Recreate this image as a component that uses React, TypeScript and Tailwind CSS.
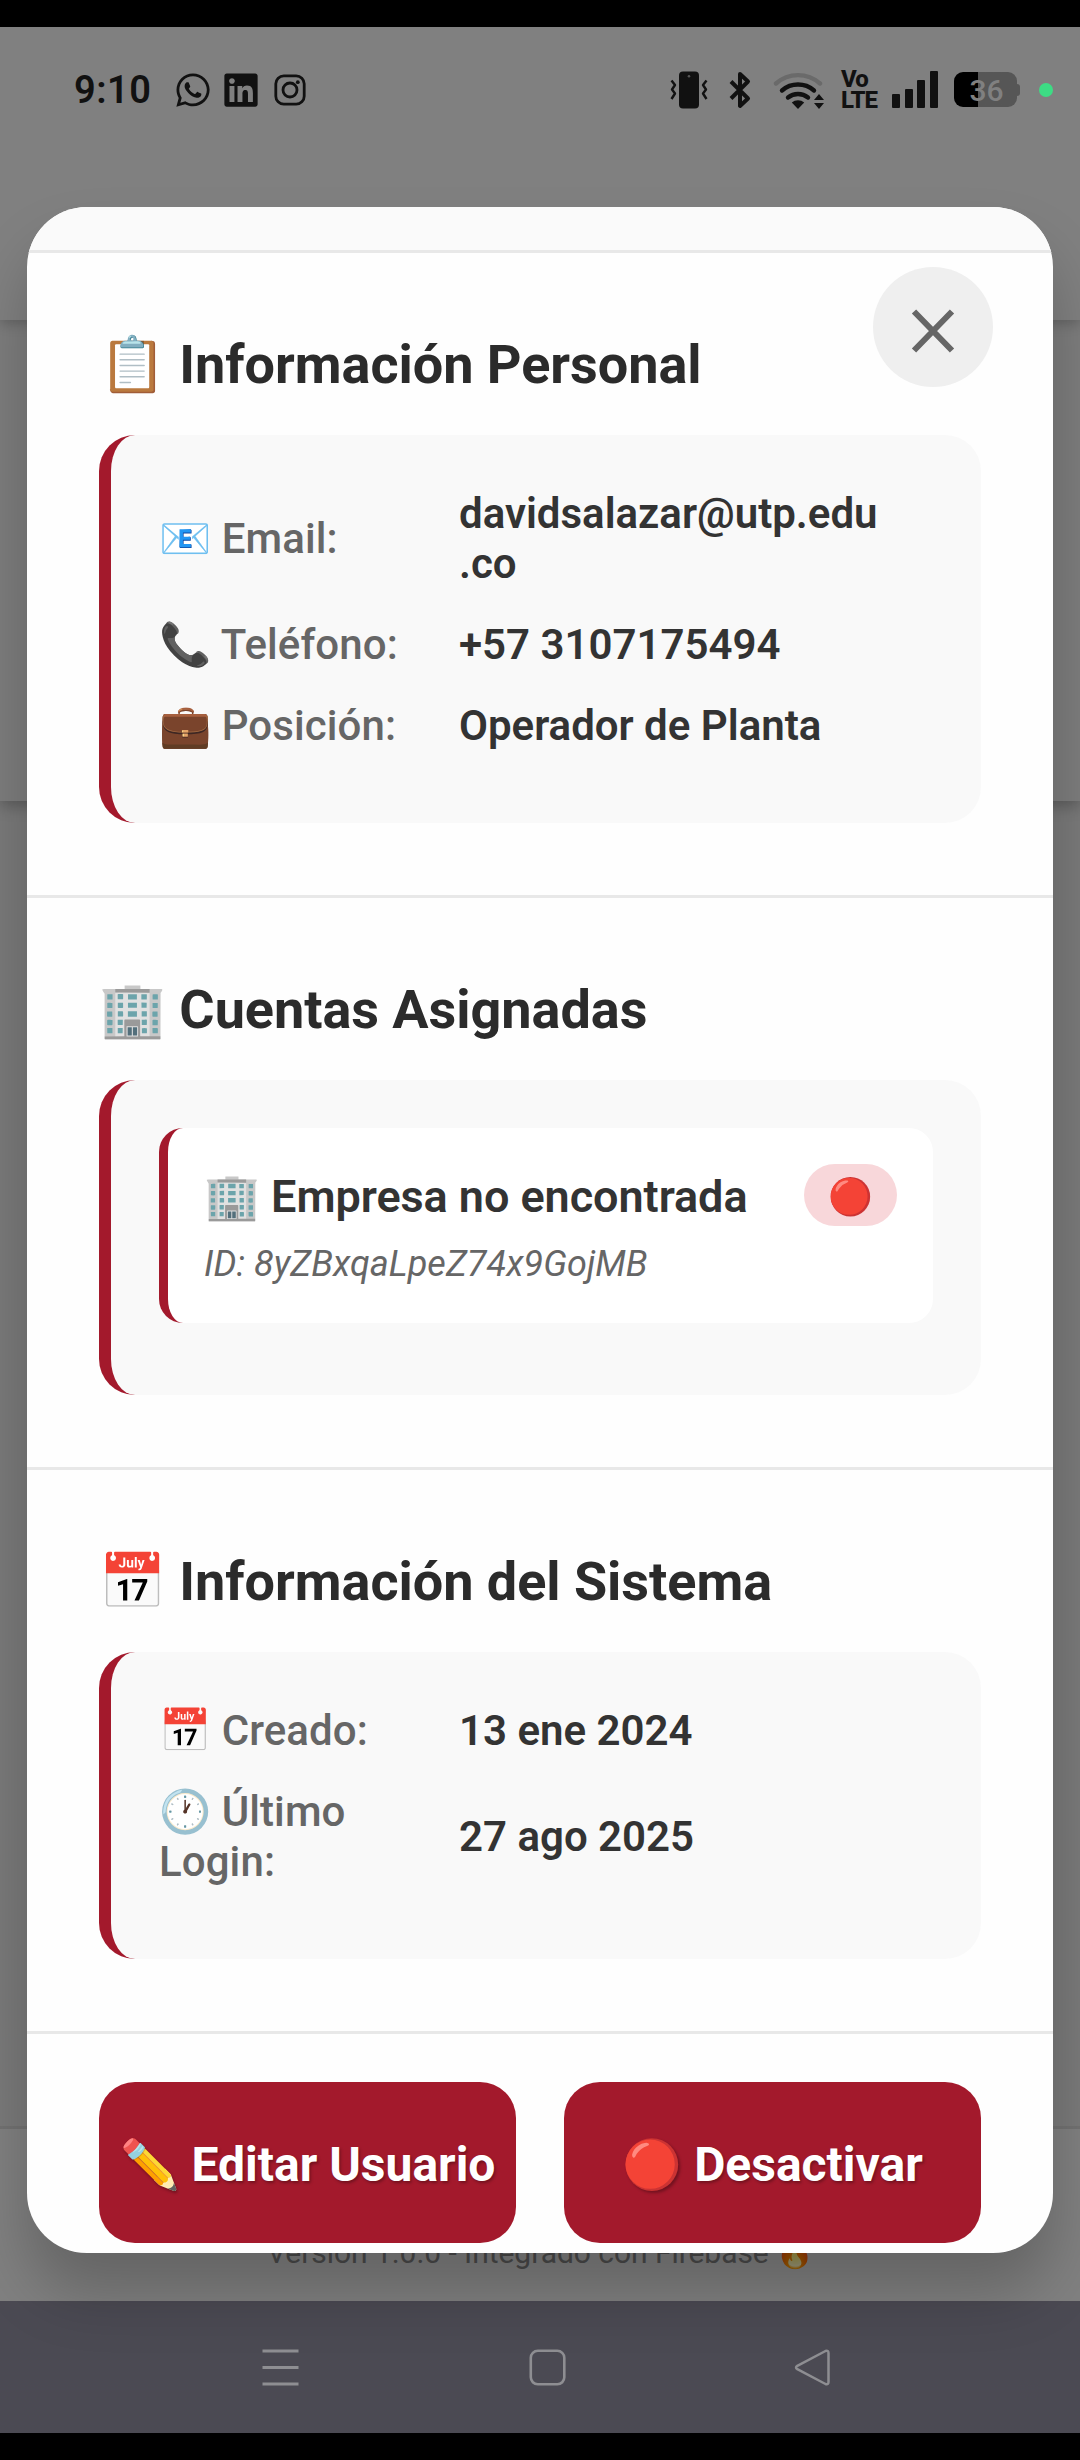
import type { ReactNode } from "react";
import { FaLinkedin, FaWhatsapp } from "react-icons/fa";

function StatusBar() {
  return (
    <div className="flex h-[125px] items-center justify-between pr-[27px] pl-[74px] text-[#111]">
      <div className="flex items-center">
        <span className="w-[102px] text-[38px] leading-[44px] font-semibold tracking-[0.5px]">9:10</span>
        <FaWhatsapp className="h-[38px] w-[34px]" />
        <FaLinkedin className="ml-[14px] h-[38px] w-[34px]" />
        <svg className="ml-[16px] h-[32px] w-[32px]" viewBox="0 0 32 32" fill="none" stroke="currentColor" strokeWidth="2.8">
          <rect x="1.8" y="1.8" width="28.4" height="28.4" rx="8" />
          <circle cx="16" cy="16" r="7" />
          <circle cx="23.8" cy="8.2" r="1.9" fill="currentColor" stroke="none" />
        </svg>
      </div>
      <div className="flex items-center">
        <svg className="h-[38px] w-[38px]" viewBox="0 0 38 38" fill="none" stroke="currentColor" strokeWidth="2.4">
          <rect x="9" y="0.5" width="20" height="37" rx="4" fill="currentColor" stroke="none" />
          <circle cx="19" cy="5.2" r="1.3" fill="#555" stroke="none" />
          <path d="M1.500 9.500l3.500 4.500-3 4.500 3 4-3.500 5.500" strokeLinejoin="round" />
          <path d="M36.500 9.500l-3.500 4.500 3 4.500-3 4 3.500 5.500" strokeLinejoin="round" />
        </svg>
        <svg className="ml-[21px] h-[38px] w-[22px]" viewBox="0 0 22 38" fill="none" stroke="currentColor" strokeWidth="4" strokeLinejoin="round">
          <path d="M2 10.500L19 27.500 11 35V3l8 7.500L2 27.500" />
        </svg>
        <svg className="ml-[22px] h-[38px] w-[52px]" viewBox="0 0 52 38" fill="none" strokeWidth="4.4" strokeLinecap="round">
          <path d="M3 12.500a33 33 0 0 1 44 0" stroke="#6a6a6a" />
          <path d="M9 19.500a24.500 24.500 0 0 1 32 0" stroke="currentColor" />
          <path d="M15 26.500a16 16 0 0 1 20 0" stroke="currentColor" />
          <path d="M18.800 31.500a9.500 9.500 0 0 1 12.400 0L25 38z" fill="currentColor" />
          <path d="M41 29l5-6 5 6zM41 32l5 6 5-6z" fill="currentColor" />
        </svg>
        <div className="ml-[16px] flex w-[33px] flex-col text-[24px] leading-[21px] font-extrabold tracking-[-1px]">
          <span>Vo</span>
          <span>LTE</span>
        </div>
        <div className="ml-[18px] flex h-[37px] w-[46px] items-end justify-between">
          <i className="h-[14px] w-[8px] rounded-[1px] bg-[#111]" />
          <i className="h-[19px] w-[8px] rounded-[1px] bg-[#111]" />
          <i className="h-[28px] w-[8px] rounded-[1px] bg-[#111]" />
          <i className="h-[37px] w-[8px] rounded-[1px] bg-[#111]" />
        </div>
        <div className="ml-[16px] flex items-center">
          <div className="flex h-[35px] w-[63px] items-center justify-center rounded-[9px] bg-linear-to-r from-black from-[38%] to-[#565656] to-[38%] pt-[2px] pl-[2px] text-[30px] font-medium text-[#808080]">
            36
          </div>
          <i className="h-[12px] w-[3px] rounded-r-[3px] bg-[#565656]" />
        </div>
        <i className="ml-[19px] h-[14px] w-[14px] rounded-full bg-[#3ddc84]" />
      </div>
    </div>
  );
}

function Section({ title, children }: { title: string; children: ReactNode }) {
  return (
    <section className="border-b-3 border-[#e8e8e8] px-[72px] pt-[72px] pb-[72px]">
      <h2 className="mb-[30px] text-[54px] leading-[80px] font-bold tracking-[-0.04px] text-[#2b2b2b]">{title}</h2>
      {children}
    </section>
  );
}

function RowsCard({ children }: { children: ReactNode }) {
  return (
    <div className="flex flex-col gap-[31.5px] rounded-[36px] border-l-12 border-[#a3192c] bg-[#f9f9f9] pt-[54px] pr-[48px] pb-[73px] pl-[48px]">
      {children}
    </div>
  );
}

function Row({ label, value }: { label: ReactNode; value: ReactNode }) {
  return (
    <div className="flex items-center text-[42px] leading-[49.5px]">
      <span className="w-[300px] font-medium tracking-[0.1px] text-[#666]">{label}</span>
      <span className="flex-1 font-semibold whitespace-nowrap text-[#333]">{value}</span>
    </div>
  );
}

function ActionButton({ children }: { children: ReactNode }) {
  return (
    <button className="flex h-[160.5px] flex-1 items-center justify-center rounded-[36px] bg-[#a3192c] pt-[6px] text-[48px] font-bold whitespace-nowrap text-white [text-shadow:1.5px_2px_3px_rgba(0,0,0,0.3)]">
      {children}
    </button>
  );
}

function NavBar() {
  return (
    <div className="flex h-[132px] items-center bg-[#4b4a53] pl-[262px] text-[#8e8e92]">
      <svg className="h-[37px] w-[37px]" viewBox="0 0 37 37" stroke="currentColor" strokeWidth="3">
        <path d="M0.500 2H36.500M0.500 18.500H36.500M0.500 35H36.500" />
      </svg>
      <svg className="ml-[230px] h-[37px] w-[37px]" viewBox="0 0 37 37" fill="none" stroke="currentColor" strokeWidth="2.6">
        <rect x="1.800" y="1.800" width="33.500" height="33.500" rx="7" />
      </svg>
      <svg className="ml-[228px] h-[37px] w-[37px]" viewBox="0 0 37 37" fill="none" stroke="currentColor" strokeWidth="2.500" strokeLinejoin="round">
        <path d="M3.300 16.800L31.500 2Q34.500 1 34.500 4V33Q34.500 36 31.500 35L3.300 20.200Q0.800 18.500 3.300 16.800Z" />
      </svg>
    </div>
  );
}

export default function App() {
  return (
    <div className="relative h-[2460px] w-[1080px] overflow-hidden bg-black font-['Roboto',sans-serif]">
      <div className="flex h-full flex-col py-[27px]">
        <div className="z-2 h-[293px] bg-[#808080] shadow-[0_4px_12px_rgba(0,0,0,0.2)]">
          <StatusBar />
        </div>
        <div className="z-1 h-[481px] bg-[#7d7d7d] shadow-[0_5px_14px_rgba(0,0,0,0.25)]" />
        <div className="flex-1 bg-[#7a7a7a]" />
        <footer className="flex h-[175px] items-end justify-center border-t-3 border-[#727272] bg-[#808080] pb-[30px]">
          <p className="text-[30px] leading-[36px] tracking-[-0.05px] whitespace-nowrap text-[#4a4a4a]">
            Versión 1.0.0 - Integrado con Firebase <span className="brightness-60">🔥</span>
          </p>
        </footer>
        <NavBar />
      </div>

      <div className="absolute top-[207px] left-[27px] z-10 h-[2046px] w-[1026px] rounded-[60px] shadow-[0_40px_60px_rgba(0,0,0,0.22)]">
        <div className="h-full overflow-hidden rounded-[60px] bg-[#fefefe]">
          <div className="h-[46px] border-b-3 border-[#e8e8e8] bg-[#fafafa]" />
          <Section title="📋 Información Personal">
            <RowsCard>
              <Row label="📧 Email:" value={<>davidsalazar@utp.edu<br />.co</>} />
              <Row label="📞 Teléfono:" value="+57 3107175494" />
              <Row label="💼 Posición:" value="Operador de Planta" />
            </RowsCard>
          </Section>
          <Section title="🏢 Cuentas Asignadas">
            <div className="rounded-[36px] border-l-12 border-[#a3192c] bg-[#f9f9f9] px-[48px] pt-[48px] pb-[72px]">
              <div className="h-[195px] rounded-[24px] border-l-9 border-[#a3192c] bg-white px-[36px] pt-[36px]">
                <div className="flex items-start justify-between">
                  <span className="text-[45px] leading-[66px] font-semibold tracking-[-0.06px] whitespace-nowrap text-[#333]">🏢 Empresa no encontrada</span>
                  <span className="flex h-[62px] w-[93px] items-center justify-center rounded-[31px] bg-[#f8d7da] pt-[3px] text-[36px] leading-[42px]">🔴</span>
                </div>
                <p className="mt-[13px] text-[36px] leading-[42px] tracking-[0.03px] text-[#666] italic">ID: 8yZBxqaLpeZ74x9GojMB</p>
              </div>
            </div>
          </Section>
          <Section title="📅 Información del Sistema">
            <RowsCard>
              <Row label="📅 Creado:" value="13 ene 2024" />
              <Row label={<>🕐 Último<br />Login:</>} value="27 ago 2025" />
            </RowsCard>
          </Section>
          <div className="flex gap-[48px] px-[72px] pt-[48px]">
            <ActionButton>✏️ Editar Usuario</ActionButton>
            <ActionButton>🔴 Desactivar</ActionButton>
          </div>
        </div>
        <button className="absolute top-[60px] right-[60px] flex h-[120px] w-[120px] items-center justify-center rounded-full bg-[#efefef] pt-[7px]">
          <svg className="h-[46px] w-[46px]" viewBox="0 0 46 46" stroke="#666" strokeWidth="6">
            <path d="M4 3.500L42 42.500M42 3.500L4 42.500" />
          </svg>
        </button>
      </div>
    </div>
  );
}
